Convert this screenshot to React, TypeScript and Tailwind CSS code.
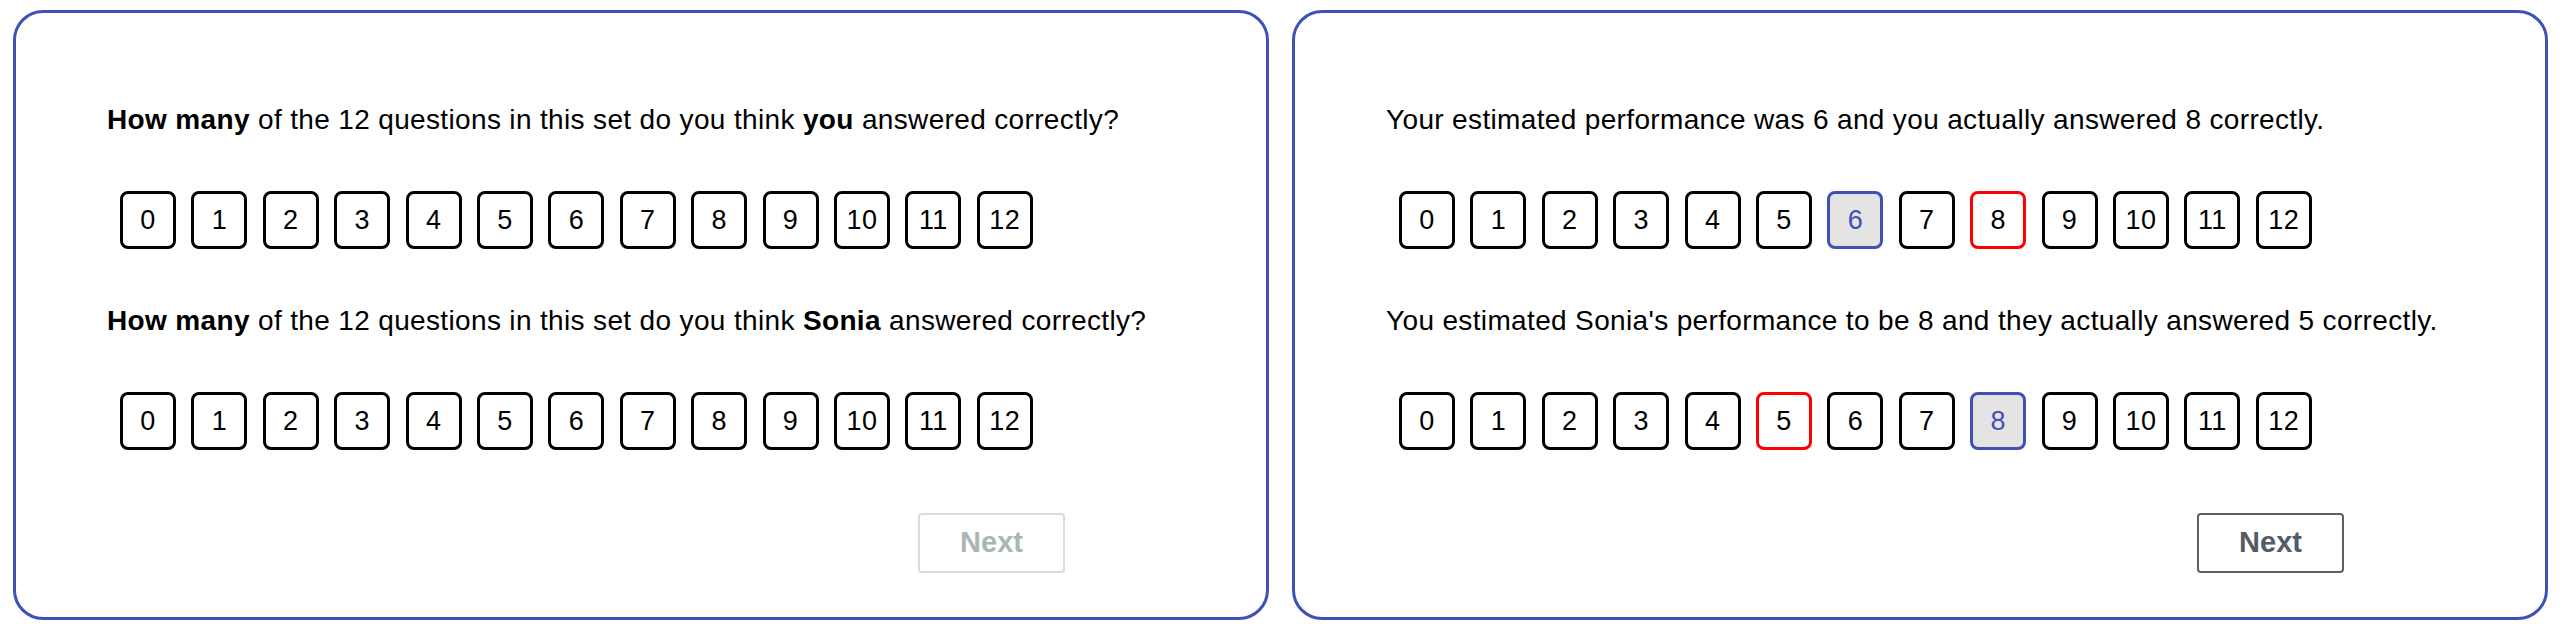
import type { ReactNode } from "react";

type Mark = "none" | "estimate" | "actual";

const VALUES = Array.from({ length: 13 }, (_, i) => i);

function ScoreButton({ value, mark }: { value: number; mark: Mark }) {
  const tone =
    mark === "estimate"
      ? "border-[#3f51b5] bg-[#e4e4e4] text-[#3f51b5]"
      : mark === "actual"
        ? "border-[#ff0000] bg-white text-black"
        : "border-black bg-white text-black";
  return (
    <button
      type="button"
      className={`flex h-[58px] w-[56px] items-center justify-center rounded-[8px] border-[3px] text-[27px] leading-none tracking-[0.3px] ${tone}`}
    >
      {value}
    </button>
  );
}

function ScoreRow({ estimate, actual }: { estimate?: number; actual?: number }) {
  return (
    <div className="mt-[56px] ml-[13px] flex gap-[15.4px]">
      {VALUES.map((v) => (
        <ScoreButton
          key={v}
          value={v}
          mark={v === estimate ? "estimate" : v === actual ? "actual" : "none"}
        />
      ))}
    </div>
  );
}

function Question({ children, first }: { children: ReactNode; first?: boolean }) {
  return (
    <p
      className={`text-[28px] leading-[30px] tracking-[0.35px] text-black ${first ? "" : "mt-[57px]"}`}
    >
      {children}
    </p>
  );
}

function Card({ children, canContinue }: { children: ReactNode; canContinue: boolean }) {
  return (
    <div className="h-[610px] w-[1256px] shrink-0 rounded-[30px] border-[3px] border-[#3f51b5] bg-white pt-[92px] pl-[91px]">
      {children}
      <div className="mt-[63px] mr-[201px] flex justify-end">
        <button
          type="button"
          disabled={!canContinue}
          className={
            canContinue
              ? "h-[60px] w-[147px] rounded-[4px] border-2 border-[#5a6068] bg-white text-[29px] font-bold text-[#535b64]"
              : "h-[60px] w-[147px] rounded-[4px] border-2 border-[#d7dcdc] bg-white text-[29px] font-bold text-[#aab5b6]"
          }
        >
          Next
        </button>
      </div>
    </div>
  );
}

export default function App() {
  return (
    <div
      className="flex h-[644px] w-[2564px] gap-[23px] bg-white pt-[10px] pl-[13px]"
      style={{ fontFamily: '"Liberation Sans", Arial, sans-serif' }}
    >
      <Card canContinue={false}>
        <Question first>
          <b>How many</b> of the 12 questions in this set do you think <b>you</b> answered
          correctly?
        </Question>
        <ScoreRow />
        <Question>
          <b>How many</b> of the 12 questions in this set do you think <b>Sonia</b> answered
          correctly?
        </Question>
        <ScoreRow />
      </Card>

      <Card canContinue>
        <Question first>
          Your estimated performance was 6 and you actually answered 8 correctly.
        </Question>
        <ScoreRow estimate={6} actual={8} />
        <Question>
          You estimated Sonia's performance to be 8 and they actually answered 5 correctly.
        </Question>
        <ScoreRow estimate={8} actual={5} />
      </Card>
    </div>
  );
}
